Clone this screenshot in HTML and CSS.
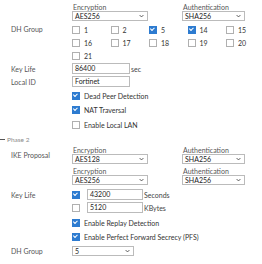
FILE: index.html
```html
<!DOCTYPE html>
<html lang="en">
<head>
    <meta charset="UTF-8">
    <title>IPsec Tunnel</title>
    <link rel="stylesheet" href="styles.css">
</head>
<body>
    <div class="form">
        <div class="row proposal first">
            <div class="label"></div>
            <div class="pair">
                <div class="field enc">
                    <span class="cap">Encryption</span>
                    <div class="select">AES256<svg viewBox="0 0 8 5"><path d="M1 1l3 3 3-3"/></svg></div>
                </div>
                <div class="field auth">
                    <span class="cap">Authentication</span>
                    <div class="select">SHA256<svg viewBox="0 0 8 5"><path d="M1 1l3 3 3-3"/></svg></div>
                </div>
            </div>
        </div>

        <div class="row dh">
            <div class="label">DH Group</div>
            <div class="grid">
                <label class="opt"><span class="box"></span>1</label>
                <label class="opt"><span class="box"></span>2</label>
                <label class="opt"><span class="box on"></span>5</label>
                <label class="opt"><span class="box on"></span>14</label>
                <label class="opt"><span class="box"></span>15</label>
                <label class="opt"><span class="box"></span>16</label>
                <label class="opt"><span class="box"></span>17</label>
                <label class="opt"><span class="box"></span>18</label>
                <label class="opt"><span class="box"></span>19</label>
                <label class="opt"><span class="box"></span>20</label>
                <label class="opt"><span class="box"></span>21</label>
            </div>
        </div>

        <div class="row line">
            <div class="label">Key Life</div>
            <div class="input wide">86400</div>
            <span class="unit">sec</span>
        </div>
        <div class="row line">
            <div class="label">Local ID</div>
            <div class="input wide">Fortinet</div>
        </div>

        <div class="row check gap1">
            <div class="label"></div>
            <label class="opt"><span class="box on"></span>Dead Peer Detection</label>
        </div>
        <div class="row check">
            <div class="label"></div>
            <label class="opt"><span class="box on"></span>NAT Traversal</label>
        </div>
        <div class="row check tall">
            <div class="label"></div>
            <label class="opt"><span class="box"></span>Enable Local LAN</label>
        </div>

        <div class="section"><span class="dash"></span>Phase 2</div>

        <div class="row proposal">
            <div class="label">IKE Proposal</div>
            <div class="stack">
                <div class="pair">
                    <div class="field enc">
                        <span class="cap">Encryption</span>
                        <div class="select">AES128<svg viewBox="0 0 8 5"><path d="M1 1l3 3 3-3"/></svg></div>
                    </div>
                    <div class="field auth">
                        <span class="cap">Authentication</span>
                        <div class="select">SHA256<svg viewBox="0 0 8 5"><path d="M1 1l3 3 3-3"/></svg></div>
                    </div>
                </div>
                <div class="pair">
                    <div class="field enc">
                        <span class="cap">Encryption</span>
                        <div class="select">AES256<svg viewBox="0 0 8 5"><path d="M1 1l3 3 3-3"/></svg></div>
                    </div>
                    <div class="field auth">
                        <span class="cap">Authentication</span>
                        <div class="select">SHA256<svg viewBox="0 0 8 5"><path d="M1 1l3 3 3-3"/></svg></div>
                    </div>
                </div>
            </div>
        </div>

        <div class="row life">
            <div class="label">Key Life</div>
            <div class="life-rows">
                <div class="life-row"><span class="box on"></span><div class="input short">43200</div><span class="unit">Seconds</span></div>
                <div class="life-row"><span class="box"></span><div class="input short">5120</div><span class="unit">KBytes</span></div>
            </div>
        </div>

        <div class="row check gap2">
            <div class="label"></div>
            <label class="opt"><span class="box on"></span>Enable Replay Detection</label>
        </div>
        <div class="row check">
            <div class="label"></div>
            <label class="opt"><span class="box on"></span>Enable Perfect Forward Secrecy (PFS)</label>
        </div>

        <div class="row dh-select">
            <div class="label">DH Group</div>
            <div class="select small">5<svg viewBox="0 0 8 5"><path d="M1 1l3 3 3-3"/></svg></div>
        </div>
    </div>
</body>
</html>
```

FILE: styles.css
```css
* {
    margin: 0;
    padding: 0;
    box-sizing: border-box;
}

body {
    background: #ffffff;
    font-family: Lato, 'Liberation Sans', sans-serif;
    font-size: 7px;
    color: #333333;
}

.form {
    display: flex;
    flex-direction: column;
    padding-top: 3px;
}

.row {
    display: flex;
    align-items: center;
}

.label {
    width: 72px;
    flex: none;
    padding-left: 11px;
    color: #555555;
}

/* proposal selects */
.proposal {
    align-items: flex-start;
}

.proposal .label {
    padding-top: 5px;
}

.stack {
    display: flex;
    flex-direction: column;
    gap: 3px;
}

.pair {
    display: flex;
    gap: 34px;
}

.field {
    display: flex;
    flex-direction: column;
}

.cap {
    height: 8px;
    line-height: 8px;
    padding-left: 1px;
    color: #555555;
}

.enc .select {
    width: 76px;
}

.auth .select {
    width: 63px;
}

.select {
    height: 10px;
    border: 1px solid #bbbbbb;
    background: #ffffff;
    display: flex;
    align-items: center;
    justify-content: space-between;
    padding: 0 3px 0 2px;
    color: #222222;
}

.select svg {
    width: 5px;
    height: 4px;
    fill: none;
    stroke: #444444;
    stroke-width: 1.4;
}

.select.small {
    width: 62px;
}

/* checkboxes */
.box {
    width: 8px;
    height: 8px;
    flex: none;
    border: 1px solid #b0b0b0;
    background: #ffffff;
    position: relative;
}

.box.on {
    background: #2d7bd0;
    border-color: #2d7bd0;
}

.box.on::after {
    content: '';
    position: absolute;
    left: 1px;
    top: 0px;
    width: 3px;
    height: 2px;
    border-left: 1px solid #ffffff;
    border-bottom: 1px solid #ffffff;
    transform: rotate(-45deg);
    transform-origin: left bottom;
    left: 2px;
    top: 1px;
}

.opt {
    display: flex;
    align-items: center;
    gap: 4px;
    color: #333333;
}

.dh {
    margin-top: 2px;
    align-items: flex-start;
}

.dh .label {
    height: 13px;
    line-height: 13px;
}

.grid {
    display: grid;
    grid-template-columns: repeat(5, 38.5px);
    grid-auto-rows: 13px;
    align-items: center;
}

/* inputs */
.line {
    height: 13px;
}

.line:first-of-type {
    margin-top: 1px;
}

.input {
    height: 11px;
    border: 1px solid #bbbbbb;
    padding-left: 2px;
    line-height: 9px;
    color: #222222;
}

.input.wide {
    width: 58px;
}

.input.short {
    width: 56px;
}

.unit {
    padding-left: 1px;
    color: #444444;
}

.check {
    height: 14px;
}

.gap1 {
    margin-top: 1px;
}

.tall {
    height: 15px;
}

.section {
    height: 14px;
    display: flex;
    align-items: center;
    gap: 2px;
    color: #8a8a8a;
    font-size: 6.5px;
}

.dash {
    width: 5px;
    height: 1px;
    background: #555555;
}

.life {
    margin-top: 4px;
    align-items: flex-start;
}

.life .label {
    padding-top: 2px;
}

.life-rows {
    display: flex;
    flex-direction: column;
    gap: 2px;
}

.life-row {
    display: flex;
    align-items: center;
    gap: 7px;
}

.life-row .unit {
    margin-left: -7px;
}

.gap2 {
    margin-top: 3px;
}

.dh-select {
    margin-top: 2px;
}
```
